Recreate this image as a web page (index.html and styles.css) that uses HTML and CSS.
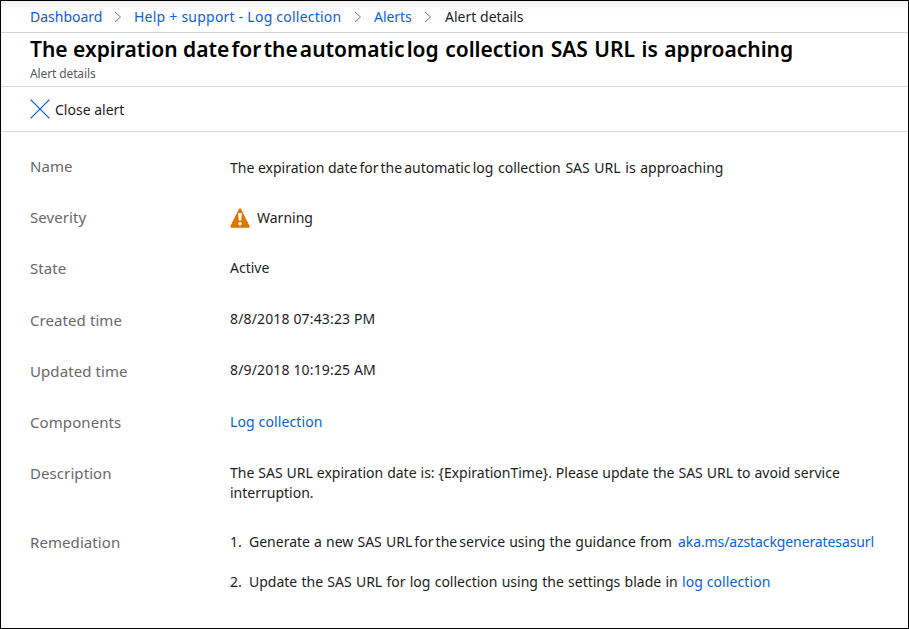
FILE: index.html
```
<!DOCTYPE html>
<html lang="en">
<head><meta charset="utf-8"><title>Alert details</title><link rel="stylesheet" href="styles.css"></head>
<body>
<main class="blade">
  <nav class="crumbs">
    <a class="crumb-home">Dashboard</a>
    <svg class="chev" viewBox="0 0 8 12"><path d="M1 1l5.5 5L1 11"/></svg>
    <a class="crumb-help">Help + support - Log collection</a>
    <svg class="chev" viewBox="0 0 8 12"><path d="M1 1l5.5 5L1 11"/></svg>
    <a class="crumb-alerts">Alerts</a>
    <svg class="chev" viewBox="0 0 8 12"><path d="M1 1l5.5 5L1 11"/></svg>
    <span class="crumb-current">Alert details</span>
  </nav>
  <header class="head">
    <h1>The expiration date<span class="tight"> for the automatic </span><span class="tail">log collection SAS URL is approaching</span></h1>
    <p>Alert details</p>
  </header>
  <div class="toolbar">
    <svg class="close" viewBox="0 0 20 20"><path d="M.6.6l18.8 18.8M19.4.6L.6 19.4"/></svg>
    <span>Close alert</span>
  </div>
  <dl class="props">
    <dt>Name</dt>
    <dd class="name">The expiration date<span class="tight"> for the automatic </span><span class="tail">log collection SAS URL is approaching</span></dd>
    <dt>Severity</dt>
    <dd class="severity"><svg class="warn" viewBox="0 0 20 20"><path class="tri" d="M10 1.2L18.8 18.8H1.2z"/><path class="mark" d="M8.2 5h3.6l-.5 7.6H8.7z"/><circle class="mark" cx="10" cy="15.7" r="1.8"/></svg><span>Warning</span></dd>
    <dt>State</dt>
    <dd>Active</dd>
    <dt>Created time</dt>
    <dd class="date">8/8/2018 07:43:23 PM</dd>
    <dt>Updated time</dt>
    <dd class="date">8/9/2018 10:19:25 AM</dd>
    <dt>Components</dt>
    <dd class="component"><a>Log collection</a></dd>
    <dt>Description</dt>
    <dd class="description">The SAS URL expiration date is: {ExpirationTime}. Please update the SAS URL to avoid service<br>interruption.</dd>
    <dt>Remediation</dt>
    <dd>
      <div class="step"><span class="num">1.</span><span class="step-one">Generate a new SAS URL<span class="tight"> for the </span>service using the guidance from</span><a class="guide">aka.ms/azstackgeneratesasurl</a></div>
      <div class="step"><span class="num">2.</span><span class="step-two">Update the SAS URL for log collection using the settings blade in</span><a class="logs">log collection</a></div>
    </dd>
  </dl>
</main>
</body>
</html>
```
FILE: styles.css
```
*{box-sizing:border-box}
body{margin:0;font:14px/20px "Noto Sans",sans-serif;color:#1c1c1c}
.blade{width:909px;height:629px;border:1px solid #000;background:#fff}
a{color:#0b61d8}
.crumbs{display:flex;height:32px;padding-left:29px;align-items:center;border-bottom:1px solid #d3d3d3;background:linear-gradient(#f0f0f0,#fff 9px)}
.crumb-home{width:72px}
.crumb-help{width:208px;letter-spacing:.23px}
.crumb-alerts{width:38px;letter-spacing:-.05px}
.crumb-current{margin-left:1px;letter-spacing:.02px}
.chev{width:8px;height:12px;margin:0 12px;fill:none;stroke:#777;flex:none}
.head{height:54px;padding-left:29px;border-bottom:1px solid #d8d8d8}
h1{margin:0;font-size:21px;line-height:32px;font-weight:600;color:#000;white-space:nowrap}
h1 .tight{word-spacing:-3.3px}
h1 .tail{word-spacing:1px}
p{margin:0;font-size:12px;line-height:18px;color:#5a5a5a;letter-spacing:-.12px}
.toolbar{display:flex;height:45px;padding:0 0 1px 29px;align-items:center;gap:5px;border-bottom:1px solid #d8d8d8}
.toolbar span{padding-top:2px}
.close{width:20px;height:20px;fill:none;stroke:#0b61d8;stroke-width:1.3}
.props{display:grid;grid-template-columns:200px 1fr;grid-template-rows:repeat(6,51.2px) 69px auto;margin:0;padding:25px 0 0 29px}
dt{margin-top:-1px;font-size:15px;color:#686868;letter-spacing:.08px}
dd{margin:-1px 0 0;white-space:nowrap}
.name{margin-top:1px}
.name .tight{word-spacing:-1.6px}
.name .tail{word-spacing:1px}
.severity{display:flex;gap:7px;margin-top:0;height:20px}
.warn{width:20px;height:20px}
.tri{fill:#df7500;stroke:#df7500;stroke-width:2;stroke-linejoin:round}
.mark{fill:#fff}
.date{letter-spacing:.15px;margin-top:-1.5px}
.component{letter-spacing:.12px}
.description{word-spacing:.32px}
.step{display:flex;margin-bottom:20px}
.num{width:19px}
.step-one{width:429px;word-spacing:.5px}
.step-one .tight{word-spacing:-1.5px}
.step-two{width:433px;word-spacing:.6px}
.guide{letter-spacing:-.1px}
.logs{letter-spacing:.1px}
```
